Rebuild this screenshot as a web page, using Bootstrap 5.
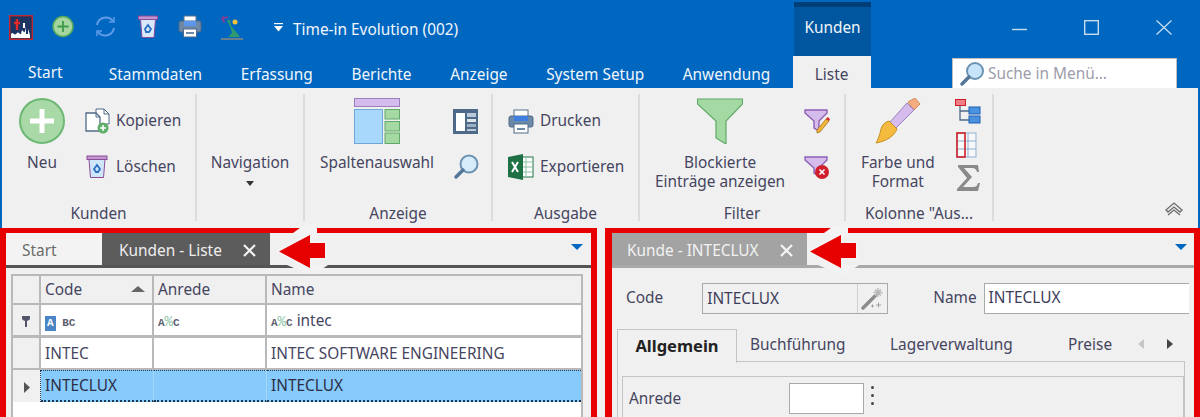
<!DOCTYPE html>
<html lang="de">
<head>
<meta charset="utf-8">
<title>Time-in Evolution</title>
<link href="https://cdn.jsdelivr.net/npm/bootstrap@5.3.0/dist/css/bootstrap.min.css" rel="stylesheet">
<style>
html,body{height:417px;overflow:hidden}
body{font-family:"Noto Sans","Liberation Sans",sans-serif;font-size:15.4px;color:#45455f;background:#0067c0;line-height:19px}
.app{width:1200px;height:417px;overflow:hidden}
.titlerow{height:56px;color:#f2f6fb;flex:none}
.qat{width:794px;padding:15px 0 0 9px}
.qat svg{flex:none}
.qat-i1{margin-right:19px}.qat-i2{margin-right:20px}.qat-i3{margin-right:21px}.qat-i4{margin-right:20px}.qat-i5{margin-right:18px}.qat-i6{margin-right:29px}
.qat-title{margin:5px 0 0 9px;white-space:nowrap}
.ctx{width:77px;margin-top:2px;background:#00569f;border-top:5px solid #003e78;padding-top:11px;text-align:center}
.winbtns{padding:20px 0 0 141px;gap:57px}
.tabsrow{height:32px;color:#f2f6fb;flex:none}
.rtab{padding:9px 19.3px 0;white-space:nowrap}
.rtab-first{padding:7px 27px 0 28px}
.rtab-active{background:#f0f0f0;color:#45455f;width:78px;padding:9px 0 0;text-align:center;margin-left:3px}
.searchbox{position:relative;margin-left:auto;margin-right:23px;width:225px;height:30px;margin-top:2px;background:#fff;border:1px solid #bdbdbd;border-bottom:0;padding:5px 0 0 35px;color:#9d9daa;white-space:nowrap}
.searchbox svg{position:absolute;left:6px;top:1px}
.ribbon{height:140px;margin:0 2px;background:#f0f0f0;flex:none}
.rgroup{border-right:2px solid #dcdcdc;margin-top:6px;margin-bottom:7px;flex:none;position:relative}
.rbody{padding-top:4px;height:107px}
.rlabel{text-align:center;padding-top:3px;white-space:nowrap}
.g1{width:195px}.g2{width:108px}.g3{width:188px}.g4{width:147px}.g5{width:206px}.g6{width:148px}
.big{display:flex;flex-direction:column;align-items:center;flex:none;text-align:center;white-space:nowrap}
.big svg{display:block;margin-bottom:9px}
.stack{display:flex;flex-direction:column;flex:none}
.smallbtn{height:46px;display:flex;align-items:center;gap:6px;white-space:nowrap}
.sbl{margin-top:-2px}
.pl17{padding-left:17px}.pl15{padding-left:15px}
.chev{margin:auto 15px 10px auto}
.panes{height:189px;gap:8px;background:#f0f0f0;flex:none}
.pane{border:solid #e60000;border-width:5px 0 0 0;background:#f0f0f0;position:relative}
.pane-l{width:597px;border-left-width:6px;border-right-width:6px;border-right-style:solid}
.pane-r{width:595px;border-left-width:7px;border-left-style:solid;border-right-width:6px;border-right-style:solid}
.strip{height:35px;position:relative;flex:none}
.strip-l{border-bottom:3px solid #555}
.strip-r{border-bottom:3px solid #a9a9a9}
.dtab{height:32px;display:flex;align-items:center;white-space:nowrap;padding-top:2px}
.dtab-start{width:96px;padding-left:16px;color:#6b6b6b;background:#f3f3f3}
.dtab-dark{width:168px;padding-left:17px;background:#5c5c5c;color:#eee}
.dtab-gray{width:195px;padding-left:15px;background:#a3a3a3;color:#f2f2f2}
.dtab .xmark{margin-left:auto}
.dtab-dark .xmark{margin-right:14px}.dtab-gray .xmark{margin-right:14px}
.tabarrow{position:absolute;top:-5px;overflow:visible}
.bluecaret{position:absolute;top:11px;width:0;height:0;border:6px solid transparent;border-top:6px solid #0067c0;border-bottom:0}
.gridwrap{margin:6px 8px 0 5px;flex:1;background:#fff;border:solid #b9b9b9;border-width:2px 2px 0 2px;overflow:hidden}
.dg{table-layout:fixed;width:572px;margin:0;border-collapse:separate;border-spacing:0;color:#45455f}
.dg td{padding:0 4px;height:30px;border:solid #b9b9b9;border-width:0 2px 2px 0;font-weight:400;vertical-align:middle;background:#fff;box-shadow:none;color:#45455f;white-space:nowrap;overflow:hidden}
.dg .rowh td{height:29px}
.dg .hd,.dg .ind{background:#f0f0f0}
.dg .c-i{width:28px;padding:0;text-align:center}.dg .c-code{width:113px}.dg .c-an{width:113px}
.dg .rowf td{height:33px;border-bottom-width:3px;padding-top:3px}
.dg .rowf .ind{padding-top:0}
.dg .rowplain td{height:32px}
.dg .rowsel td{height:32px;background:#86cbfb;border-top:1px dotted #1d3a55;border-bottom:2px dotted #1d3a55;border-right:1px solid #a5d6f7;color:#2d2d45}
.dg .rowsel .ind{background:#f0f0f0;border:0;border-right:1px dotted #1d3a55}
.dg .rowsel .lastc{border-right:2px dotted #1d3a55}
.sorter{float:right;margin:6px 3px 0 0;width:0;height:0;border:7px solid transparent;border-bottom:6px solid #666;border-top:0}
.mono{font-family:"Liberation Mono",monospace;font-size:11px;font-weight:700;color:#5f5f70}
.mono-a{display:inline-block;background:#4a86c5;color:#fff;padding:0 2px;line-height:15px}
.mono-g{color:#8cc6a8;font-size:14px;font-weight:400}
.formrow{padding:15px 0 0 14px;height:61px;align-items:flex-start;flex:none}
.flabel{padding-top:5px}
.codebox{margin-left:39px;width:186px;height:31px;border:1px solid #a9a9a9;display:flex;background:#f0f0f0;align-items:center;padding-left:4px;color:#3d3d5a}
.wand{margin-left:auto;width:30px;height:29px;border-left:1px solid #d0d0d0;display:flex;align-items:center;justify-content:center}
.nameinput{margin-left:7px;flex:1;height:31px;border:1px solid #a9a9a9;border-right:0;background:#fff;padding:4px 0 0 4px;margin-right:5px;color:#3d3d5a}
.ptabs{margin-left:5px;margin-right:9px;height:33px;border-bottom:1px solid #c4c4c4;position:relative;flex:none}
.ptab{padding-top:6px;white-space:nowrap}
.ptab-on{width:120px;height:34px;border:1px solid #c4c4c4;border-bottom:0;background:#f0f0f0;font-weight:700;font-size:16.5px;color:#222;text-align:center;padding-top:6px}
.ptab-2{margin-left:13px;width:140px}.ptab-3{width:178px}.ptab-4{width:60px}
.pnav{margin-left:auto;gap:23px;padding:10px 12px 0 0}
.tri-l{width:0;height:0;border:5px solid transparent;border-right:6px solid #c6c6c6;border-left:0}
.tri-r{width:0;height:0;border:5px solid transparent;border-left:6px solid #444;border-right:0}
.tabpage{margin:0 9px 0 5px;border-left:1px solid #c4c4c4;border-right:1px solid #c4c4c4;padding:14px 0 0 4px;flex:1}
.innerbox{border:1px solid #c4c4c4;border-bottom:0;height:100px;padding:6px 0 0 6px}
.anrede-flabel{padding-top:6px}
.anrede-in{margin-left:108px;width:75px;height:31px;background:#fff;border:1px solid #a9a9a9}
.dots{margin-left:7px;padding-top:3px;gap:5px}
.dots span{width:3px;height:3px;background:#444;display:block;border-radius:50%}
</style>
</head>
<body>
<div class="app d-flex flex-column">
  <div class="titlerow d-flex">
    <div class="qat d-flex align-items-start">
      <svg class="qat-i1" width="24" height="25" viewBox="0 0 24 25"><rect x=".7" y=".7" width="22.6" height="23.6" fill="#1c3563" stroke="#c4262e" stroke-width="1.4"/><path d="M8 4v11M5 8h6" stroke="#e02a2a" stroke-width="2.4"/><path d="M2 19c2-3 3 2 5 0s2-2 4 0 1-6 3-3 2 0 3-4v7h2v-5l2 6v3H2z" fill="#fff"/><rect x="14" y="8" width="2" height="5" fill="#fff"/></svg>
      <svg class="qat-i2" width="22" height="23" viewBox="0 0 22 23"><circle cx="11" cy="11.5" r="10" fill="#a5d6a0" stroke="#55a85c" stroke-width="1.5"/><path d="M11 6v11M5.5 11.5h11" stroke="#3f9a49" stroke-width="1.8"/></svg>
      <svg class="qat-i3" width="23" height="23" viewBox="0 0 23 23" fill="none" stroke="#5f9ae8" stroke-width="2"><path d="M3 10A9 9 0 0 1 19 6"/><path d="M20 13A9 9 0 0 1 4 17"/><path d="M20 2v5h-5" stroke-width="1.5"/><path d="M3 21v-5h5" stroke-width="1.5"/></svg>
      <svg class="qat-i4" width="20" height="24" viewBox="0 0 20 24"><rect x=".5" y="1" width="19" height="3.5" fill="#c595cf" stroke="#8a4c9a"/><path d="M2.5 4.5h15l-1.500 18H4z" fill="#d8e9f9" stroke="#8a4c9a"/><path d="M7 14l3-4 3 4-2 3H8z" fill="none" stroke="#2b70c4" stroke-width="1.8"/></svg>
      <svg class="qat-i5" width="24" height="23" viewBox="0 0 24 23"><rect x="6" y="1" width="12" height="6" fill="#fff" stroke="#54708f"/><rect x="1" y="6" width="22" height="11" rx="2" fill="#6d89a8" stroke="#4f6a88"/><rect x="6" y="6" width="12" height="5" fill="#5c97ee"/><rect x="5.5" y="14" width="13" height="8" fill="#fff" stroke="#4f6a88"/><path d="M8 18h8" stroke="#6d89a8" stroke-width="2"/></svg>
      <svg class="qat-i6" width="24" height="26" viewBox="0 0 24 26"><path d="M1 24h22" stroke="#6b7e8e" stroke-width="2"/><path d="M7 5l4 9 1 4-4 4h12l-3-4-6-7-1-6z" fill="#2f9a6b"/><circle cx="15" cy="7" r="2.500" fill="#f4c23e"/><path d="M1 4l7-2M3 1l1 7" stroke="#8a3d8f" stroke-width="1.600"/></svg>
      <svg width="11" height="10" viewBox="0 0 11 10" style="margin-top:8px"><path d="M1 .5h9" stroke="#fff" stroke-width="1.400"/><path d="M1 3h9L5.500 8.500z" fill="#fff"/></svg>
      <div class="qat-title">Time-in Evolution (002)</div>
    </div>
    <div class="ctx">Kunden</div>
    <div class="winbtns d-flex align-items-start">
      <svg width="15" height="15" viewBox="0 0 15 15"><path d="M0 9.500h15" stroke="#c7dcf1" stroke-width="1.400"/></svg>
      <svg width="15" height="15" viewBox="0 0 15 15"><rect x=".7" y=".7" width="13.600" height="13.600" fill="none" stroke="#c7dcf1" stroke-width="1.400"/></svg>
      <svg width="16" height="15" viewBox="0 0 16 15"><path d="M.5 .5l15 14M15.500 .5L.5 14.500" stroke="#c7dcf1" stroke-width="1.300"/></svg>
    </div>
  </div>
  <div class="tabsrow d-flex">
    <div class="rtab rtab-first">Start</div>
    <div class="rtab">Stammdaten</div>
    <div class="rtab">Erfassung</div>
    <div class="rtab">Berichte</div>
    <div class="rtab">Anzeige</div>
    <div class="rtab">System Setup</div>
    <div class="rtab">Anwendung</div>
    <div class="rtab-active">Liste</div>
    <div class="searchbox"><svg width="28" height="28" viewBox="0 0 28 28"><circle cx="16" cy="11" r="8" fill="#c6e4fa" stroke="#6d93b3" stroke-width="2"/><path d="M10 17l-7 7" stroke="#55789a" stroke-width="3.500" stroke-linecap="round"/></svg>Suche in Menü…</div>
  </div>
  <div class="ribbon d-flex">
    <div class="rgroup g1">
      <div class="rbody d-flex pl17">
        <div class="big"><svg width="46" height="46" viewBox="0 0 46 46"><circle cx="23" cy="23" r="22" fill="#a8d9a6" stroke="#6db874" stroke-width="2"/><path d="M23 11v24M11 23h24" stroke="#fff" stroke-width="5"/></svg>Neu</div>
        <div class="stack" style="margin-left:20px">
          <div class="smallbtn"><svg width="25" height="26" viewBox="0 0 25 26"><path d="M11 1h8l5 5v10H11z" fill="#fff" stroke="#4f6a88"/><path d="M19 1v5h5" fill="none" stroke="#4f6a88"/><path d="M1 5h10l4 4v14H1z" fill="#fff" stroke="#4f6a88" stroke-width="1.300"/><path d="M11 5v4h4" fill="none" stroke="#4f6a88"/><circle cx="18" cy="20" r="5.500" fill="#5fae6a"/><path d="M18 17v6M15 20h6" stroke="#fff" stroke-width="1.500"/></svg><span class="sbl">Kopieren</span></div>
          <div class="smallbtn"><svg width="25" height="24" viewBox="0 0 25 24"><rect x="2" y="1" width="20" height="3.500" fill="#c595cf" stroke="#8a4c9a"/><path d="M4 4.500h16l-1.500 18H5.500z" fill="#cfe6fa" stroke="#8a4c9a"/><path d="M9 14l3-4 3 4-2 3h-2z" fill="none" stroke="#2b70c4" stroke-width="1.800"/></svg><span class="sbl">Löschen</span></div>
        </div>
      </div>
      <div class="rlabel">Kunden</div>
    </div>
    <div class="rgroup g2">
      <div class="rbody d-flex justify-content-center">
        <div class="big"><div style="height:55px"></div>Navigation<svg width="8" height="5" viewBox="0 0 8 5" style="margin-top:9px"><path d="M0 0h8L4 5z" fill="#333"/></svg></div>
      </div>
    </div>
    <div class="rgroup g3">
      <div class="rbody d-flex pl15">
        <div class="big"><svg width="46" height="46" viewBox="0 0 46 46"><rect x=".5" y=".5" width="45" height="8" fill="#d6bcec" stroke="#9c7fbd"/><rect x=".5" y="11.500" width="28" height="34" fill="#a8d8fb" stroke="#6ea6d6"/><rect x="31" y="11.500" width="14.500" height="9.500" fill="#a5d9a3" stroke="#5faa66"/><rect x="31" y="23.500" width="14.500" height="9.500" fill="#a5d9a3" stroke="#5faa66"/><rect x="31" y="35" width="14.500" height="10.500" fill="#a5d9a3" stroke="#5faa66"/></svg>Spaltenauswahl</div>
        <div class="stack" style="margin-left:19px">
          <div class="smallbtn"><svg width="25" height="25" viewBox="0 0 25 25"><rect width="25" height="25" fill="#4f6a88"/><rect x="3" y="4" width="9" height="18" fill="#fff"/><rect x="14" y="4" width="9" height="4" fill="#bccbd9"/><rect x="14" y="10" width="9" height="3" fill="#dfe6ec"/><rect x="14" y="15" width="9" height="3" fill="#9db1c4"/><rect x="14" y="20" width="9" height="2" fill="#bccbd9"/></svg></div>
          <div class="smallbtn"><svg width="26" height="26" viewBox="0 0 26 26"><circle cx="16" cy="10" r="8.500" fill="#d6ecfb" stroke="#6d93b3" stroke-width="2"/><path d="M10 16l-7 7" stroke="#55789a" stroke-width="3.500" stroke-linecap="round"/></svg></div>
        </div>
      </div>
      <div class="rlabel">Anzeige</div>
    </div>
    <div class="rgroup g4">
      <div class="rbody d-flex pl15">
        <div class="stack">
          <div class="smallbtn"><svg width="26" height="25" viewBox="0 0 26 25"><rect x="6" y="1" width="14" height="7" fill="#fff" stroke="#54708f"/><rect x="1" y="7" width="24" height="11" rx="2" fill="#6d89a8" stroke="#4f6a88"/><rect x="6" y="7" width="14" height="5" fill="#3f7fe0"/><rect x="6" y="15" width="14" height="9" fill="#fff" stroke="#4f6a88"/><path d="M9 20h8" stroke="#6d89a8" stroke-width="2"/></svg><span class="sbl">Drucken</span></div>
          <div class="smallbtn"><svg width="26" height="26" viewBox="0 0 26 26"><rect x="12" y="3" width="13" height="20" fill="#fff" stroke="#217346"/><path d="M12 8h13M12 13h13M12 18h13M18 3v20" stroke="#8fbfa3"/><path d="M0 3l15-3v26L0 23z" fill="#1e7145"/><path d="M4 8l6 10M10 8l-6 10" stroke="#fff" stroke-width="2"/></svg><span class="sbl">Exportieren</span></div>
        </div>
      </div>
      <div class="rlabel">Ausgabe</div>
    </div>
    <div class="rgroup g5">
      <div class="rbody d-flex pl15">
        <div class="big"><svg width="46" height="46" viewBox="0 0 46 46"><path d="M.5 1h45v5L29 23v23l-10-6V23L.5 6z" fill="#a5d9a3" stroke="#5faa66" stroke-width="1.200"/></svg>Blockierte<br>Einträge anzeigen</div>
        <div class="stack" style="margin-left:19px">
          <div class="smallbtn"><svg width="26" height="26" viewBox="0 0 26 26"><path d="M1 2h22v3l-8 8v10l-5-3v-7L1 5z" fill="#d6bcec" stroke="#8c5fb5" stroke-width="1.400"/><path d="M13 22l9-11 3 2-9 11-3 1z" fill="#f2b43a" stroke="#a5761d" stroke-width=".8"/><path d="M22 11l1.500-2 2.500 2-1 2z" fill="#d8242c"/></svg></div>
          <div class="smallbtn"><svg width="26" height="25" viewBox="0 0 26 25"><path d="M1 2h22v3l-8 8v8l-5-3v-5L1 5z" fill="#d6bcec" stroke="#8c5fb5" stroke-width="1.400"/><circle cx="18" cy="17" r="7" fill="#cf1f2c"/><path d="M15.500 14.500l5 5M20.500 14.500l-5 5" stroke="#fff" stroke-width="1.600"/></svg></div>
        </div>
      </div>
      <div class="rlabel">Filter</div>
    </div>
    <div class="rgroup g6">
      <div class="rbody d-flex pl15">
        <div class="big"><svg width="46" height="46" viewBox="0 0 46 46"><path d="M33 4l7-4 5 6-6 6z" fill="#f5ac7e" stroke="#d58b5c"/><path d="M32 5l7 7-18 18-6-6z" fill="#d6bcec" stroke="#9c7fbd"/><path d="M14 23l8 8c-3 7-10 12-21 14 2-3 4-9 5-14 1-4 4-7 8-8z" fill="#f5bb3f" stroke="#c58f22"/></svg>Farbe und<br>Format</div>
        <div class="stack" style="margin-left:20px;margin-top:1px">
          <svg width="26" height="25" viewBox="0 0 26 25" style="margin-bottom:8px"><rect x=".5" y=".5" width="10" height="6" fill="#f07e86" stroke="#cc1f2a"/><path d="M5 7v14h9M5 12h9" fill="none" stroke="#4f6a88" stroke-width="1.300"/><rect x="14" y="8" width="11" height="7" fill="#4a92df" stroke="#1c5fb4"/><rect x="14" y="17" width="11" height="7" fill="#4a92df" stroke="#1c5fb4"/></svg>
          <svg width="26" height="26" viewBox="0 0 26 26" style="margin-bottom:6px"><rect x="2" y="1" width="19" height="24" fill="#f6f8fa" stroke="#8fb1cf"/><path d="M13 1v24M2 9h19M2 17h19" stroke="#8fb1cf"/><rect x="2" y="1" width="8" height="24" fill="none" stroke="#cc1f2a" stroke-width="1.600"/></svg>
          <svg width="26" height="28" viewBox="0 0 26 28"><path d="M3 1h20l1 7h-2c-1-3-2-4-5-4H9l8 9-9 10h10c3 0 4-1 5-4h2l-2 8H2v-2l10-11L3 3z" fill="#8a8a8a"/></svg>
        </div>
      </div>
      <div class="rlabel">Kolonne "Aus...</div>
    </div>
    <svg class="chev" width="18" height="16" viewBox="0 0 18 16" fill="none" stroke="#6c6c6c" stroke-width="1.300"><path d="M1 8l8-7 8 7-2 2-6-5-6 5z"/><path d="M3 13l6-5 6 5"/></svg>
  </div>
  <div class="panes d-flex">
    <div class="pane pane-l d-flex flex-column">
      <div class="strip strip-l d-flex">
        <div class="dtab dtab-start">Start</div>
        <div class="dtab dtab-dark">Kunden - Liste<svg class="xmark" width="13" height="13" viewBox="0 0 13 13"><path d="M1 1l11 11M12 1L1 12" stroke="#f2f2f2" stroke-width="2.200"/></svg></div>
        <svg class="tabarrow" style="left:270px" width="52" height="42" viewBox="0 0 52 42"><path d="M17 5L28-3H41V10ZM11 37H52L40 45H30Z" fill="#f3f3f3"/><path d="M3 23.500L34 7V15H49V30H34V40Z" fill="#e60000" stroke="#f3f3f3" stroke-width="5" paint-order="stroke" stroke-linejoin="round"/></svg>
        <div class="bluecaret" style="left:565px"></div>
      </div>
      <div class="gridwrap">
        <table class="table dg">
          <colgroup><col class="c-i"><col class="c-code"><col class="c-an"><col></colgroup>
          <tr class="rowh"><td class="hd c-i"></td><td class="hd c-code">Code<span class="sorter"></span></td><td class="hd c-an">Anrede</td><td class="hd">Name</td></tr>
          <tr class="rowf"><td class="ind c-i"><svg width="10" height="12" viewBox="0 0 10 12"><path d="M1 1h8v2.500c0 1.500-2 2-3 2.500v6H4V6C3 5.500 1 5 1 3.500z" fill="#55556a"/></svg></td><td><span class="mono"><span class="mono-a">A</span> BC</span></td><td><span class="mono">A<span class="mono-g">%</span>C</span></td><td><span class="mono">A<span class="mono-g">%</span>C</span> intec</td></tr>
          <tr class="rowplain"><td class="ind c-i"></td><td>INTEC</td><td></td><td>INTEC SOFTWARE ENGINEERING</td></tr>
          <tr class="rowsel"><td class="ind c-i"><svg width="6" height="11" viewBox="0 0 6 11"><path d="M0 0l6 5.500L0 11z" fill="#555"/></svg></td><td>INTECLUX</td><td></td><td class="lastc">INTECLUX</td></tr>
        </table>
      </div>
    </div>
    <div class="pane pane-r d-flex flex-column">
      <div class="strip strip-r d-flex">
        <div class="dtab dtab-gray">Kunde - INTECLUX<svg class="xmark" width="13" height="13" viewBox="0 0 13 13"><path d="M1 1l11 11M12 1L1 12" stroke="#f5f5f5" stroke-width="2.200"/></svg></div>
        <svg class="tabarrow" style="left:195px" width="52" height="42" viewBox="0 0 52 42"><path d="M17 5L28-3H41V10ZM11 37H52L40 45H30Z" fill="#f3f3f3"/><path d="M3 23.500L34 7V15H49V30H34V40Z" fill="#e60000" stroke="#f3f3f3" stroke-width="5" paint-order="stroke" stroke-linejoin="round"/></svg>
        <div class="bluecaret" style="left:563px"></div>
      </div>
      <div class="formrow d-flex">
        <div class="flabel">Code</div>
        <div class="codebox">INTECLUX<span class="wand"><svg width="24" height="25" viewBox="0 0 24 25"><path d="M2 22L14 10" stroke="#8c8c8c" stroke-width="3.400" stroke-linecap="round"/><path d="M17 2v9M12.500 6.500h9M14 3.500l6 6M20 3.500l-6 6" stroke="#b8b8b8" stroke-width="1.400"/><path d="M15 19h5M17.500 16.500v5M10 20h3M11.500 18.500v3" stroke="#a0a0a0"/></svg></span></div>
        <div class="flabel" style="margin-left:45px">Name</div>
        <div class="nameinput">INTECLUX</div>
      </div>
      <div class="ptabs d-flex">
        <div class="ptab-on">Allgemein</div>
        <div class="ptab ptab-2">Buchführung</div>
        <div class="ptab ptab-3">Lagerverwaltung</div>
        <div class="ptab ptab-4">Preise</div>
        <div class="pnav d-flex"><span class="tri-l"></span><span class="tri-r"></span></div>
      </div>
      <div class="tabpage">
        <div class="innerbox d-flex">
          <div class="anrede-flabel">Anrede</div>
          <div class="anrede-in"></div>
          <div class="dots d-flex flex-column"><span></span><span></span><span></span></div>
        </div>
      </div>
    </div>
  </div>
</div>
</body>
</html>
